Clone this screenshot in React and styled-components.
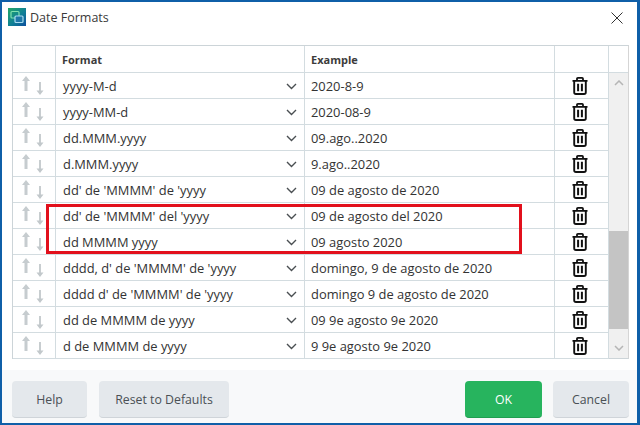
import React from 'react';
import styled, { createGlobalStyle } from 'styled-components';

const GlobalStyle = createGlobalStyle`
  html, body {
    margin: 0;
    padding: 0;
    background: #fff;
  }
  * {
    box-sizing: border-box;
  }
`;

const Window = styled.div`
  width: 640px;
  height: 425px;
  display: flex;
  flex-direction: column;
  background: #fff;
  border: solid #0f5fa8;
  border-width: 2px 3px 2px 2px;
  font-family: "Open Sans", "Liberation Sans", sans-serif;
  color: #333;
  overflow: hidden;
`;

const TitleBar = styled.div`
  height: 43px;
  flex: none;
  display: flex;
  align-items: flex-start;
  padding: 6px 14px 0 6px;
`;

const Title = styled.span`
  flex: 1;
  margin-left: 4px;
  font-size: 12.5px;
  line-height: 19px;
  color: #3a3a3a;
`;

const CloseButton = styled.svg`
  width: 12px;
  height: 12px;
  margin-top: 4px;
`;

const TableArea = styled.div`
  position: relative;
  flex: none;
  margin: 0 8px 0 10px;
  display: flex;
  height: 314px;
  border: 1px solid #ccd4d8;
  border-right-color: #d5d5d5;
`;

const Table = styled.div`
  width: 596px;
  flex: none;
`;

const Row = styled.div`
  display: grid;
  grid-template-columns: 43px 249px 250px 54px;
  height: ${(p) => (p.$head ? '27px' : '26px')};
  border-bottom: 1px solid #d3dce0;
`;

const Cell = styled.div`
  display: flex;
  align-items: center;
  border-right: 1px solid #d3dce0;
  padding: 1px ${(p) => p.$pr || 6}px 0 6px;
  font-size: 12.9px;
  white-space: nowrap;
  overflow: hidden;
`;

const HeadCell = styled(Cell)`
  font-weight: 700;
  font-size: 11px;
  color: #3c3c3c;
`;

const MoveCell = styled(Cell)`
  padding: 0 0 0 9px;
  gap: 6px;
`;

const FormatText = styled.span`
  flex: 1;
  padding-left: 1px;
`;

const TrashCell = styled(Cell)`
  justify-content: center;
  padding: 0 3px 0 0;
`;

const ScrollTrack = styled.div`
  flex: 1;
  display: flex;
  flex-direction: column;
`;

const ScrollHead = styled.div`
  height: 27px;
  border-bottom: 1px solid #d3dce0;
  background: #fff;
`;

const ScrollBody = styled.div`
  flex: 1;
  background: #f0f0f0;
  display: flex;
  flex-direction: column;
  align-items: center;
  justify-content: space-between;
`;

const ScrollButton = styled.svg`
  width: 10px;
  height: 6px;
  margin: ${(p) => (p.$down ? '0 0 7px' : '7px 0 0')};
`;

const ScrollThumb = styled.div`
  align-self: stretch;
  height: 98px;
  margin-top: 129px;
  background: #c4c4c4;
`;

const Highlight = styled.div`
  position: absolute;
  left: 33px;
  top: 158px;
  width: 476px;
  height: 50px;
  border: 3px solid #e2101c;
  pointer-events: none;
`;

const Footer = styled.div`
  flex: 1;
  margin-top: 11px;
  background: #f8f9fa;
  display: flex;
  align-items: flex-start;
  padding: 11px 8px 0 10px;
`;

const Button = styled.button`
  height: 37px;
  width: ${(p) => p.$w}px;
  margin-right: ${(p) => p.$mr || 0}px;
  border: none;
  border-bottom: 1px solid ${(p) => (p.$primary ? '#1f9e50' : '#cfd4d9')};
  border-radius: 4px;
  background: ${(p) => (p.$primary ? '#27b45e' : '#e4e8ec')};
  color: ${(p) => (p.$primary ? '#fff' : '#4a5055')};
  font-family: inherit;
  font-size: 12.3px;
  padding: 0;
`;

const Spacer = styled.div`
  flex: 1;
`;

const Logo = () => (
  <svg width="18" height="18" viewBox="0 0 18 18">
    <defs>
      <linearGradient id="logoBg" x1="0" y1="0" x2="1" y2="1">
        <stop offset="0" stopColor="#22a866" />
        <stop offset="0.55" stopColor="#0f7f96" />
        <stop offset="1" stopColor="#0d4f9e" />
      </linearGradient>
    </defs>
    <rect width="18" height="18" fill="url(#logoBg)" />
    <rect x="3" y="3.5" width="8" height="6.5" rx="1" fill="none" stroke="#7fe0b0" strokeWidth="1.2" />
    <rect x="7" y="8" width="8" height="6.5" rx="1" fill="#1d77a8" stroke="#a9dcf0" strokeWidth="1.2" />
  </svg>
);

const UpArrow = () => (
  <svg width="8" height="15" viewBox="0 0 8 15" style={{ marginTop: -4 }}>
    <path d="M4 0 L8 5 H5.5 V15 H2.5 V5 H0 Z" fill="#c6cccf" />
  </svg>
);

const DownArrow = () => (
  <svg width="8" height="13" viewBox="0 0 8 13" style={{ marginTop: 5 }}>
    <path d="M3.1 0 H4.9 V8.5 H7.5 L4 13 L0.5 8.5 H3.1 Z" fill="#c2c8cb" />
  </svg>
);

const Chevron = () => (
  <svg width="11" height="7" viewBox="0 0 11 7">
    <path d="M1 1 L5.5 5.5 L10 1" fill="none" stroke="#4a4f52" strokeWidth="1.4" />
  </svg>
);

const Trash = () => (
  <svg width="16" height="18" viewBox="0 0 16 18">
    <path d="M0.5 3.8 H15.5 M5 3.8 V1.8 Q5 0.9 5.9 0.9 H10.1 Q11 0.9 11 1.8 V3.8" fill="none" stroke="#111" strokeWidth="1.8" />
    <path d="M2.2 4 V15.2 Q2.2 17 4 17 H12 Q13.8 17 13.8 15.2 V4" fill="none" stroke="#111" strokeWidth="1.9" />
    <path d="M6.1 6.8 V14.2 M9.9 6.8 V14.2" fill="none" stroke="#111" strokeWidth="2" />
  </svg>
);

const rows = [
  ['yyyy-M-d', '2020-8-9'],
  ['yyyy-MM-d', '2020-08-9'],
  ['dd.MMM.yyyy', '09.ago..2020'],
  ['d.MMM.yyyy', '9.ago..2020'],
  ["dd' de 'MMMM' de 'yyyy", '09 de agosto de 2020'],
  ["dd' de 'MMMM' del 'yyyy", '09 de agosto del 2020'],
  ['dd MMMM yyyy', '09 agosto 2020'],
  ["dddd, d' de 'MMMM' de 'yyyy", 'domingo, 9 de agosto de 2020'],
  ["dddd d' de 'MMMM' de 'yyyy", 'domingo 9 de agosto de 2020'],
  ['dd de MMMM de yyyy', '09 9e agosto 9e 2020'],
  ['d de MMMM de yyyy', '9 9e agosto 9e 2020'],
];

const App = () => {
  return (
    <Window>
      <GlobalStyle />
      <TitleBar>
        <Logo />
        <Title>Date Formats</Title>
        <CloseButton viewBox="0 0 12 12">
          <path d="M0.5 0.5 L11.5 11.5 M11.5 0.5 L0.5 11.5" stroke="#333" strokeWidth="1" />
        </CloseButton>
      </TitleBar>
      <TableArea>
        <Table>
          <Row $head>
            <HeadCell />
            <HeadCell>Format</HeadCell>
            <HeadCell>Example</HeadCell>
            <HeadCell />
          </Row>
          {rows.map(([format, example]) => (
            <Row key={format}>
              <MoveCell>
                <UpArrow />
                <DownArrow />
              </MoveCell>
              <Cell $pr={7}>
                <FormatText>{format}</FormatText>
                <Chevron />
              </Cell>
              <Cell>{example}</Cell>
              <TrashCell>
                <Trash />
              </TrashCell>
            </Row>
          ))}
        </Table>
        <ScrollTrack>
          <ScrollHead />
          <ScrollBody>
            <ScrollButton viewBox="0 0 10 6">
              <path d="M1 5 L5 1 L9 5" fill="none" stroke="#b5b5b5" strokeWidth="1.5" />
            </ScrollButton>
            <ScrollThumb />
            <ScrollButton $down viewBox="0 0 10 6">
              <path d="M1 1 L5 5 L9 1" fill="none" stroke="#b5b5b5" strokeWidth="1.5" />
            </ScrollButton>
          </ScrollBody>
        </ScrollTrack>
        <Highlight />
      </TableArea>
      <Footer>
        <Button $w={75} $mr={12}>Help</Button>
        <Button $w={130}>Reset to Defaults</Button>
        <Spacer />
        <Button $w={77} $mr={11} $primary>OK</Button>
        <Button $w={76}>Cancel</Button>
      </Footer>
    </Window>
  );
};

export default App;
